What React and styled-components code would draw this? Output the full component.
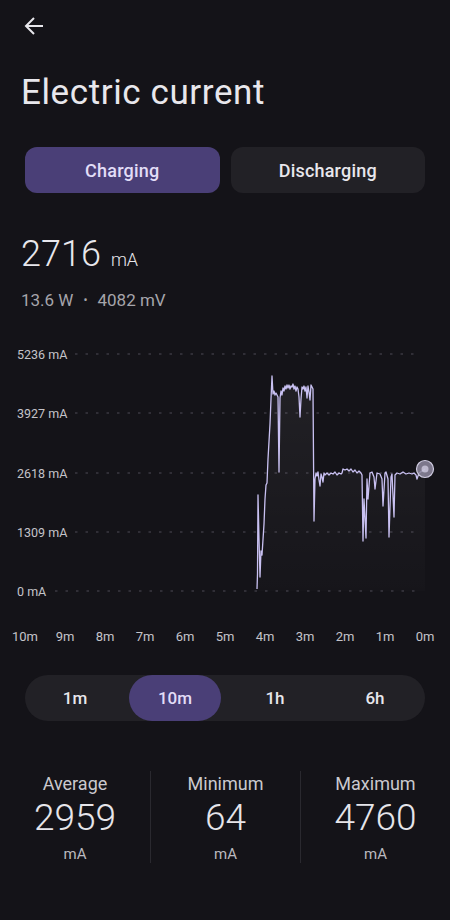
import React from 'react';
import styled, { createGlobalStyle } from 'styled-components';

const colors = {
	bg: '#141318',
	surface: '#222126',
	accent: '#4a3f77',
	accentText: '#e2ddf7',
	text: '#e8e7ec',
	muted: '#a6a5ab',
	axis: '#c4c3c9',
	grid: '#3a3940',
	line: '#c9c1f2',
	divider: '#2a292f',
};

const GlobalStyle = createGlobalStyle`
	html, body {
		margin: 0;
		padding: 0;
		background: ${colors.bg};
	}
	body {
		font-family: Roboto, "Noto Sans", sans-serif;
		color: ${colors.text};
	}
`;

const Page = styled.div`
	width: 450px;
	min-height: 920px;
	padding: 0 25px;
	box-sizing: border-box;
	background: ${colors.bg};
`;

const TopBar = styled.div`
	display: flex;
	align-items: center;
	height: 52px;
`;

const BackButton = styled.button`
	display: flex;
	align-items: center;
	justify-content: center;
	width: 20px;
	height: 20px;
	margin-left: -1px;
	padding: 0;
	border: none;
	background: none;
	color: ${colors.text};
`;

const Title = styled.h1`
	margin: 20px 0 0 -4px;
	font-size: 35px;
	line-height: 42px;
	font-weight: 400;
	letter-spacing: 0.6px;
	color: ${colors.text};
`;

const ModeTabs = styled.div`
	display: grid;
	grid-template-columns: 1fr 1fr;
	gap: 11px;
	margin-top: 33px;
`;

const ModeButton = styled.div`
	display: flex;
	align-items: center;
	justify-content: center;
	height: 46px;
	border-radius: 12px;
	font-size: 18px;
	font-weight: 500;
	letter-spacing: 0.2px;
	background: ${(p) => (p.$active ? colors.accent : colors.surface)};
	color: ${(p) => (p.$active ? colors.accentText : colors.text)};
`;

const Reading = styled.div`
	display: flex;
	align-items: baseline;
	gap: 10px;
	margin: 39px 0 0 -4px;
	line-height: 44px;
`;

const BigValue = styled.span`
	font-size: 36px;
	font-weight: 300;
`;

const Unit = styled.span`
	font-size: 18px;
	font-weight: 300;
`;

const SubReading = styled.div`
	margin: 8px 0 0 -4px;
	font-size: 17px;
	line-height: 20px;
	color: ${colors.muted};
`;

const Dot = styled.span`
	margin: 0 10px;
	font-size: 12px;
	vertical-align: 2px;
`;

const ChartWrap = styled.div`
	margin: 29px -25px 0;
	height: 310px;

	svg {
		display: block;
	}
`;

const RangeTabs = styled.div`
	display: grid;
	grid-template-columns: repeat(4, 1fr);
	height: 46px;
	margin-top: 26px;
	border-radius: 23px;
	background: ${colors.surface};
`;

const RangeButton = styled.div`
	display: flex;
	align-items: center;
	justify-content: center;
	margin: 0 4px;
	border-radius: 23px;
	font-size: 17px;
	font-weight: 500;
	background: ${(p) => (p.$active ? colors.accent : 'transparent')};
	color: ${(p) => (p.$active ? colors.accentText : colors.text)};
`;

const Stats = styled.div`
	display: grid;
	grid-template-columns: repeat(3, 1fr);
	margin: 50px -25px 0;
`;

const StatCol = styled.div`
	display: flex;
	flex-direction: column;
	align-items: center;
	padding-top: 2px;
	height: 92px;
	box-sizing: border-box;
	border-left: ${(p) => (p.$first ? 'none' : `1.5px solid ${colors.divider}`)};
`;

const StatLabel = styled.div`
	font-size: 18px;
	line-height: 22px;
	color: #cac9ce;
`;

const StatValue = styled.div`
	font-size: 37px;
	line-height: 44px;
	margin-top: 1px;
	font-weight: 300;
	color: #e6e5ea;
`;

const StatUnit = styled.div`
	font-size: 15px;
	line-height: 18px;
	margin-top: 5px;
	color: #bab9be;
`;

// chart data in page coordinates (x: 40px per minute, y: 0 mA at 592)
const points = [
	[257, 590], [257.5, 575], [258, 496], [259, 540], [260, 578], [261, 552], [262, 556],
	[264, 525], [265, 500], [266, 486], [267, 484], [268, 460], [270, 425], [271, 400],
	[272, 377], [273, 395], [274, 392], [275, 396], [276, 394], [278, 398], [279, 473],
	[280, 399], [281, 392], [282, 396], [283, 389], [284, 392], [285, 387], [286, 390],
	[287, 386], [288, 389], [289, 386], [290, 390], [291, 387], [292, 388], [293, 385],
	[294, 390], [295, 387], [296, 392], [297, 388], [298, 390], [299, 398], [300, 418],
	[301, 400], [302, 388], [303, 390], [304, 387], [305, 392], [306, 388], [307, 399],
	[308, 387], [309, 393], [310, 401], [311, 386], [312, 388], [313, 390], [314, 522],
	[315, 480], [316, 474], [317, 477], [318, 473], [319, 481], [320, 487], [321, 475],
	[322, 478], [323, 483], [324, 474], [325, 476], [327, 474], [329, 476], [331, 474],
	[333, 475], [335, 473], [337, 476], [339, 474], [341, 475], [342, 474], [343, 470],
	[345, 471], [347, 470], [349, 472], [351, 470], [353, 473], [355, 471], [357, 474],
	[359, 472], [361, 474], [362, 476], [363, 542], [364, 500], [366, 539], [367, 480],
	[368, 500], [370, 474], [372, 473], [374, 478], [375, 490], [377, 474], [380, 475],
	[382, 480], [383, 507], [385, 474], [386, 473], [388, 480], [389, 538], [391, 478],
	[392, 475], [394, 518], [395, 476], [397, 474], [400, 475], [403, 473], [406, 475],
	[409, 474], [412, 475], [414, 474], [416, 476], [417, 480], [419, 474], [422, 472],
	[425, 470],
];

const yTicks = [
	{ label: '5236 mA', y: 355, start: 75 },
	{ label: '3927 mA', y: 414, start: 75 },
	{ label: '2618 mA', y: 474, start: 75 },
	{ label: '1309 mA', y: 533, start: 75 },
	{ label: '0 mA', y: 592, start: 55 },
];

const xTicks = ['10m', '9m', '8m', '7m', '6m', '5m', '4m', '3m', '2m', '1m', '0m'];

const linePath = points.map(([x, y], i) => `${i ? 'L' : 'M'}${x} ${y}`).join(' ');
const areaPath = `${linePath} L425 592 L257 592 Z`;

const CurrentChart = () => (
	<svg width="450" height="310" viewBox="0 340 450 310">
		<defs>
			<linearGradient id="area" x1="0" y1="0" x2="0" y2="1">
				<stop offset="0" stopColor="#ffffff" stopOpacity="0.06" />
				<stop offset="1" stopColor="#ffffff" stopOpacity="0.01" />
			</linearGradient>
		</defs>
		{yTicks.map((t) => (
			<g key={t.label}>
				<line
					x1={t.start}
					x2="421"
					y1={t.y}
					y2={t.y}
					stroke={colors.grid}
					strokeWidth="1.6"
					strokeDasharray="2.5 8"
				/>
				<text
					x="17"
					y={t.y + 4.5}
					fontSize="12.5"
					fill={colors.axis}
					fontFamily="Roboto, sans-serif"
				>
					{t.label}
				</text>
			</g>
		))}
		<path d={areaPath} fill="url(#area)" />
		<path d={linePath} fill="none" stroke={colors.line} strokeWidth="1.3" strokeLinejoin="round" />
		<circle cx="425" cy="470" r="8.5" fill="#8e8aa0" opacity="0.85" />
		<circle cx="425" cy="470" r="8.5" fill="none" stroke="#cfcbe0" strokeWidth="1.2" />
		<circle cx="425" cy="470" r="3.5" fill="#d8d4ea" opacity="0.7" />
		{xTicks.map((t, i) => (
			<text
				key={t}
				x={25 + i * 40}
				y="642"
				textAnchor="middle"
				fontSize="13"
				fill={colors.axis}
				fontFamily="Roboto, sans-serif"
			>
				{t}
			</text>
		))}
	</svg>
);

const ArrowBack = () => (
	<svg width="20" height="20" viewBox="0 0 20 20" fill="none" stroke="currentColor" strokeWidth="2">
		<path d="M19 10H2.5" />
		<path d="M10 2 L2 10 L10 18" />
	</svg>
);

const stats = [
	{ label: 'Average', value: '2959' },
	{ label: 'Minimum', value: '64' },
	{ label: 'Maximum', value: '4760' },
];

const ranges = ['1m', '10m', '1h', '6h'];

const App = () => {
	return (
		<Page>
			<GlobalStyle />
			<TopBar>
				<BackButton aria-label="Back">
					<ArrowBack />
				</BackButton>
			</TopBar>
			<Title>Electric current</Title>
			<ModeTabs>
				<ModeButton $active>Charging</ModeButton>
				<ModeButton>Discharging</ModeButton>
			</ModeTabs>
			<Reading>
				<BigValue>2716</BigValue>
				<Unit>mA</Unit>
			</Reading>
			<SubReading>
				13.6 W<Dot>•</Dot>4082 mV
			</SubReading>
			<ChartWrap>
				<CurrentChart />
			</ChartWrap>
			<RangeTabs>
				{ranges.map((r) => (
					<RangeButton key={r} $active={r === '10m'}>
						{r}
					</RangeButton>
				))}
			</RangeTabs>
			<Stats>
				{stats.map((s, i) => (
					<StatCol key={s.label} $first={i === 0}>
						<StatLabel>{s.label}</StatLabel>
						<StatValue>{s.value}</StatValue>
						<StatUnit>mA</StatUnit>
					</StatCol>
				))}
			</Stats>
		</Page>
	);
};

export default App;
